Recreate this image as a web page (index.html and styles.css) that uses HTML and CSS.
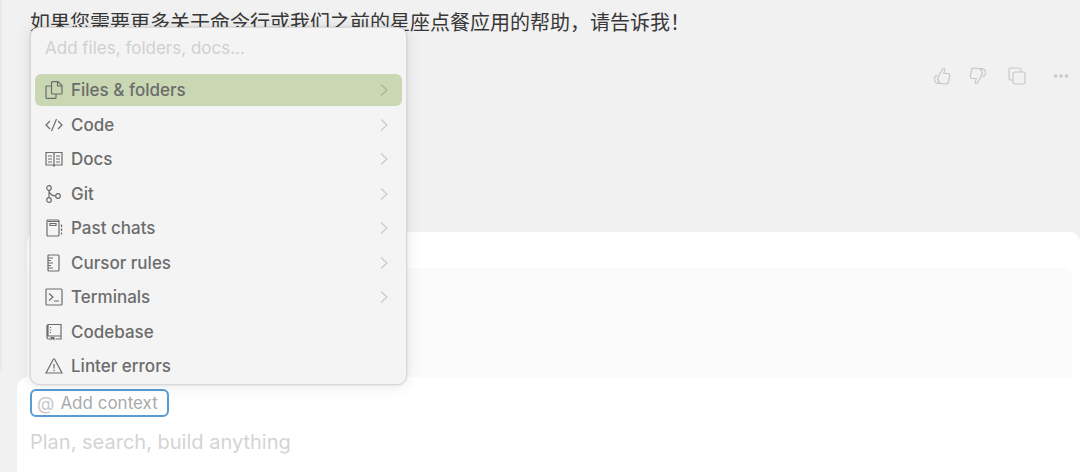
FILE: index.html
```html
<!DOCTYPE html>
<html lang="zh-CN">
<head>
    <meta charset="UTF-8">
    <meta name="viewport" content="width=device-width, initial-scale=1.0">
    <title>Chat</title>
    <link rel="stylesheet" href="styles.css">
</head>
<body>
    <main class="chat">
        <div class="divider"></div>
        <section class="conversation">
            <p class="message">如果您需要更多关于命令行或我们之前的星座点餐应用的帮助，请告诉我！</p>
            <div class="actions">
                <div class="votes">
                    <button class="action" aria-label="Good response">
                        <svg class="icon" viewBox="0 0 18 18"><path d="M6 8.500L9.500 2.200C10 1.200 12 1.400 11.700 3L10.800 6.500H15C16.300 6.500 16.800 7.300 16.600 8.300L15.500 15C15.200 16.300 14.500 16.800 13.300 16.800C9 16.800 7.500 16.800 5.500 14.500C4.300 12.500 4.500 10.500 6 8.500ZM4.300 8.300C.5 9 .5 16 4.800 16.300H7"/></svg>
                    </button>
                    <button class="action" aria-label="Bad response">
                        <svg class="icon" viewBox="0 0 18 18"><path d="M12 9.500L8.500 15.800C8 16.800 6 16.600 6.300 15L7.200 11.500H3C1.700 11.500 1.200 10.700 1.400 9.700L2.500 3C2.800 1.700 3.500 1.200 4.700 1.200C9 1.200 10.500 1.200 12.500 3.500C13.700 5.500 13.500 7.500 12 9.500ZM13.700 9.700C17.500 9 17.500 2 13.200 1.700H11"/></svg>
                    </button>
                </div>
                <button class="action" aria-label="Copy">
                    <svg class="icon" viewBox="0 0 18 18"><rect x="5" y="5" width="12" height="12" rx="2"/><path d="M5 13H3Q1 13 1 11V3Q1 1 3 1H11Q13 1 13 3V5"/></svg>
                </button>
                <button class="action more" aria-label="More">
                    <svg class="icon dots" viewBox="0 0 18 18"><circle cx="3.500" cy="9" r="1.800"/><circle cx="9" cy="9" r="1.800"/><circle cx="14.500" cy="9" r="1.800"/></svg>
                </button>
            </div>
        </section>

        <section class="panel">
            <div class="preview"></div>
        </section>

        <section class="composer">
            <div class="context">
                <button class="add-context"><span class="at">@</span>Add context</button>

                <div class="menu">
                    <input class="search" type="text" placeholder="Add files, folders, docs..." aria-label="Add files, folders, docs">
                    <div class="items">
                        <button class="item active">
                            <svg class="icon" viewBox="0 0 18 18"><path d="M7.500 .6H13L17 4.600V12Q17 13 16 13H7.500Q6.500 13 6.500 12V1.600Q6.500 .6 7.500 .6ZM12.500 .6V5H17M6.500 5H2Q1 5 1 6V16.400Q1 17.400 2 17.400H10Q11 17.400 11 16.400V13"/></svg>
                            Files &amp; folders
                            <svg class="arrow" viewBox="0 0 8 14"><path d="M1 1.500L7 7L1 12.500"/></svg>
                        </button>
                        <button class="item">
                            <svg class="icon" viewBox="0 0 18 18"><path d="M5 5L1 9L5 13M13 5L17 9L13 13M11.500 3L6.500 15"/></svg>
                            Code
                            <svg class="arrow" viewBox="0 0 8 14"><path d="M1 1.500L7 7L1 12.500"/></svg>
                        </button>
                        <button class="item">
                            <svg class="icon" viewBox="0 0 18 18"><path d="M9 3.500Q8.500 2.500 7.500 2.500H1V15H7.500Q8.500 15 9 16Q9.500 15 10.500 15H17V2.500H10.500Q9.500 2.500 9 3.500V16M3 6H7M3 9H7M3 12H7M11 6H15M11 9H15M11 12H15"/></svg>
                            Docs
                            <svg class="arrow" viewBox="0 0 8 14"><path d="M1 1.500L7 7L1 12.500"/></svg>
                        </button>
                        <button class="item">
                            <svg class="icon" viewBox="0 0 18 18"><circle cx="4" cy="3" r="2.300"/><circle cx="4" cy="15" r="2.300"/><circle cx="13" cy="11" r="2.300"/><path d="M4 5.300V12.700M4 6Q5 10.500 10.700 11"/></svg>
                            Git
                            <svg class="arrow" viewBox="0 0 8 14"><path d="M1 1.500L7 7L1 12.500"/></svg>
                        </button>
                        <button class="item">
                            <svg class="icon" viewBox="0 0 18 18"><path d="M3 1H13Q14 1 14 2V16Q14 17 13 17H3Q2 17 2 16V2Q2 1 3 1ZM3 2.500H14M5 4.500H11V6.500H5ZM16.500 5.500V8M16.500 9.500V12M16.500 13.500V15.500"/></svg>
                            Past chats
                            <svg class="arrow" viewBox="0 0 8 14"><path d="M1 1.500L7 7L1 12.500"/></svg>
                        </button>
                        <button class="item">
                            <svg class="icon" viewBox="0 0 18 18"><path d="M4 1H13Q14 1 14 2V16Q14 17 13 17H4Q3 17 3 16V2Q3 1 4 1ZM3 4H8M3 6.500H6M3 9H8M3 11.500H6M3 14H8"/></svg>
                            Cursor rules
                            <svg class="arrow" viewBox="0 0 8 14"><path d="M1 1.500L7 7L1 12.500"/></svg>
                        </button>
                        <button class="item">
                            <svg class="icon" viewBox="0 0 18 18"><rect x="1" y="1" width="16" height="16" rx="1"/><path d="M4 5.500L8 9L4 12.500M9 13H14"/></svg>
                            Terminals
                            <svg class="arrow" viewBox="0 0 8 14"><path d="M1 1.500L7 7L1 12.500"/></svg>
                        </button>
                        <button class="item">
                            <svg class="icon" viewBox="0 0 18 18"><path d="M5 16H3.500Q2 16 2 14V3Q2 1.500 3.500 1.500H16V16H10.500M2.500 13H16M3 2V13"/><path d="M5.500 14V17.500L7.500 16L9.500 17.500V14Z" fill="currentColor" stroke="none"/><path d="M5.500 4V11.500" stroke-dasharray="1 1.500"/></svg>
                            Codebase
                        </button>
                        <button class="item">
                            <svg class="icon" viewBox="0 0 18 18"><path d="M8.500 2H9.500L17 16H1ZM9 7V11.500M9 12.700V14.200"/></svg>
                            Linter errors
                        </button>
                    </div>
                </div>
            </div>
            <textarea class="prompt" rows="1" placeholder="Plan, search, build anything" aria-label="Prompt"></textarea>
        </section>
    </main>
</body>
</html>
```
FILE: styles.css
```css
* {
    box-sizing: border-box;
}
body {
    margin: 0;
    background: #f1f1f1;
    font-family: Inter, "Noto Sans CJK SC", sans-serif;
    color: #6c6c6c;
}
button, input, textarea {
    font: inherit;
    color: inherit;
    border: 0;
    padding: 0;
    background: none;
    outline: none;
}
button {
    cursor: pointer;
}
.chat {
    position: relative;
    display: flex;
    flex-direction: column;
    min-height: 100vh;
    overflow: hidden;
}
/* pane edge, stops just above the composer */
.divider {
    position: absolute;
    top: 0;
    bottom: 102px;
    left: 0;
    width: 2px;
    background: #e9e9e9;
}
.conversation {
    padding: 8px 10px 148px 30px;
}
.message {
    margin: 0;
    font-family: "Noto Sans CJK SC", sans-serif;
    font-size: 20px;
    line-height: 28px;
    color: #383838;
}
.actions {
    display: flex;
    justify-content: flex-end;
    gap: 21px;
    margin-top: 31px;
}
.votes {
    display: flex;
    gap: 18px;
}
.action {
    height: 17px;
    color: #c8c8c8;
}
.more {
    margin-left: 5px;
}
.icon {
    display: block;
    flex: none;
    width: 18px;
    height: 18px;
    fill: none;
    stroke: currentColor;
    stroke-width: 1.2;
}
.dots {
    fill: currentColor;
    stroke: none;
}
.panel {
    margin-left: 27px;
    padding: 36px 8px 0 0;
    background: #fff;
    border-radius: 10px 10px 0 0;
}
.preview {
    height: 109px;
    background: #fbfbfb;
    border-radius: 6px 6px 0 0;
}
.composer {
    flex: 1;
    margin-left: 17px;
    padding: 12px 13px;
    background: #fff;
    border-radius: 12px 0 0 0;
}
.context {
    position: relative;
}
.add-context {
    display: flex;
    align-items: center;
    gap: 6px;
    height: 28px;
    padding: 0 9px 0 5px;
    border: 2px solid #579bd9;
    border-radius: 6px;
    font-size: 17px;
    color: #aaa;
}
.at {
    font-size: 18px;
    color: #c8c8c8;
}
.prompt {
    display: block;
    width: 100%;
    height: 28px;
    margin-top: 11px;
    font-size: 20px;
    line-height: 28px;
    resize: none;
}
.prompt::placeholder {
    color: #d4d4d4;
}

/* context picker, opens above the button */
.menu {
    position: absolute;
    left: 0;
    bottom: 32px;
    width: 377px;
    padding: 4px 4px 2px;
    background: #f4f4f4;
    border: 1px solid #d8d8d8;
    border-radius: 9px;
    box-shadow: 0 0 16px rgba(0, 0, 0, 0.1), 0 0 2px rgba(0, 0, 0, 0.15);
}
.search {
    display: block;
    width: 100%;
    height: 32px;
    margin-bottom: 10px;
    padding: 0 10px;
    font-size: 17px;
}
.search::placeholder {
    color: #d0d0d0;
}
.items {
    display: flex;
    flex-direction: column;
    justify-content: space-between;
    height: 308px;
}
.item {
    display: flex;
    align-items: center;
    gap: 8px;
    height: 32px;
    padding: 0 14px 0 10px;
    border-radius: 6px;
    font-size: 17px;
    font-weight: 500;
    text-align: left;
}
.active {
    background: #c9d8b3;
}
.arrow {
    width: 8px;
    height: 14px;
    margin-left: auto;
    fill: none;
    stroke: #000;
    stroke-width: 1.2;
    opacity: 0.16;
}
```
